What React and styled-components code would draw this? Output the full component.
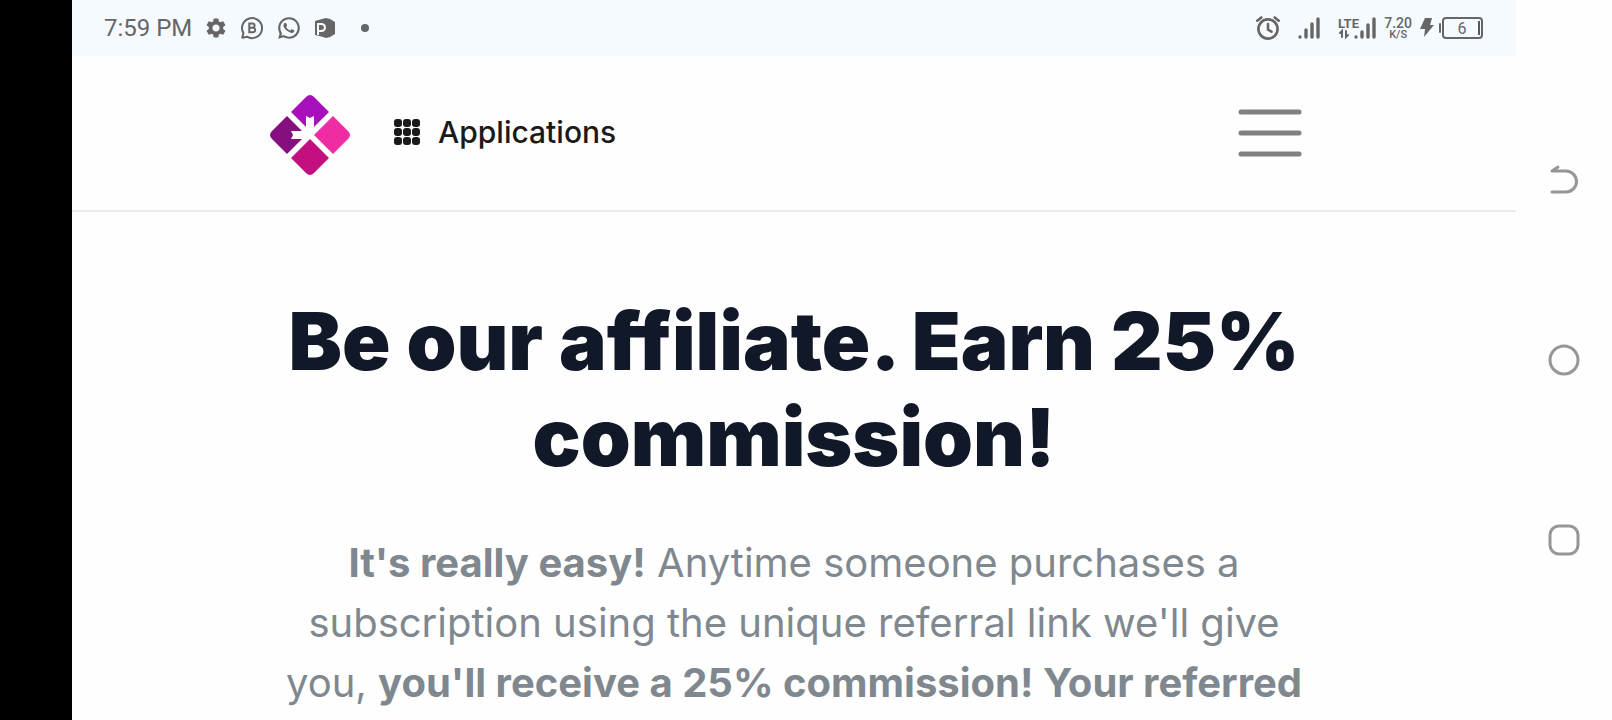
import React from 'react';
import styled, { createGlobalStyle } from 'styled-components';
import { MdSettings } from 'react-icons/md';
import { RiWhatsappLine } from 'react-icons/ri';

const GlobalStyle = createGlobalStyle`
    * {
        box-sizing: border-box;
    }

    body {
        margin: 0;
        background-color: #fefefe;
        font-family: Inter, sans-serif;
    }
`

const Screen = styled.div`
    display: grid;
    grid-template-columns: 72px 1fr 96px;
    height: 100vh;
    overflow: hidden;
`

const Bezel = styled.div`
    background-color: #000;
`

const Page = styled.div`
    min-width: 0;
    overflow: hidden;
`

// Status bar
const StatusBar = styled.div`
    display: flex;
    align-items: center;
    justify-content: space-between;
    height: 56px;
    padding: 0 32px;
    background-color: #f5faff;
    color: #666;
    font-family: Roboto, sans-serif;
`

const StatusGroup = styled.div`
    display: flex;
    align-items: center;
    gap: ${props => props.$gap}px;

    svg {
        display: block;
        flex: none;
    }
`

const Time = styled.span`
    font-size: 24px;
    line-height: 28px;
`

const Speed = styled.div`
    display: flex;
    flex-direction: column;
    align-items: center;
    padding-top: 2px;
    font-size: 14px;
    line-height: 12px;
    font-weight: 500;
`

const SpeedUnit = styled.span`
    font-size: 11px;
    line-height: 12px;
`

// Site header
const Header = styled.header`
    border-bottom: 2px solid #ebebeb;
`

const HeaderInner = styled.div`
    display: flex;
    align-items: center;
    max-width: 1080px;
    height: 154px;
    margin: 0 auto;
    padding: 0 32px 0 16px;
`

const LogoLink = styled.a`
    display: block;
    height: 80px;
    margin: 4px 44px 0 0;
`

const AppsLink = styled.a`
    display: flex;
    align-items: center;
    gap: 18px;
    margin-bottom: 2px;
    color: #1a1a1a;
    font-size: 30px;
    line-height: 36px;
    font-weight: 500;
    text-decoration: none;
`

const MenuButton = styled.button`
    margin-left: auto;
    padding: 0;
    border: 0;
    background: none;

    svg {
        display: block;
    }
`

// Hero
const Hero = styled.main`
    max-width: 1080px;
    margin: 0 auto;
    padding: 81px 16px 0;
    text-align: center;
`

const Title = styled.h1`
    margin: 0 0 48px;
    color: #111827;
    font-size: 80px;
    line-height: 96px;
    font-weight: 900;
`

const Lead = styled.p`
    margin: 0;
    color: #7f888f;
    font-size: 40px;
    line-height: 60px;
`

// Phone navigation
const PhoneNav = styled.nav`
    display: grid;
    grid-template-rows: repeat(3, 25vh);
    align-content: center;
`

const NavButton = styled.button`
    display: flex;
    align-items: center;
    justify-content: center;
    padding: 0;
    border: 0;
    background: none;
    color: #969696;
`

function BusinessIcon() {
    return (
        <svg width="24" height="24" viewBox="0 0 24 24" fill="none" stroke="currentColor" strokeWidth="2">
            <path d="M2.3 21.7l1.1-4.6A10 10 0 1 1 7 20.7z" strokeLinejoin="round" />
            <path d="M9.3 7.6h3.2a2.1 2.1 0 0 1 0 4.2H9.3zM9.3 11.8h3.7a2.2 2.2 0 0 1 0 4.4H9.3z" />
        </svg>
    )
}

function SlidesIcon() {
    return (
        <svg width="22" height="22" viewBox="0 0 22 22" fill="currentColor">
            <path d="M12 1l4 1 5 3v12l-5 3-4 1-3-1-8-2V4l7-2z" />
            <path d="M4 18V7h3.500a3 3 0 0 1 0 7H4" fill="none" stroke="#f5faff" strokeWidth="2" />
        </svg>
    )
}

function AlarmIcon() {
    return (
        <svg width="24" height="24" viewBox="0 0 24 24" fill="none" stroke="currentColor" strokeWidth="2.600" strokeLinecap="round">
            <circle cx="12" cy="13" r="9.600" />
            <path d="M12 8v5.500l3.500 2.200M1.300 4.700l4-3.200M22.700 4.700l-4-3.200" />
        </svg>
    )
}

function SignalIcon() {
    return (
        <svg width="22" height="22" viewBox="0 0 22 22" stroke="currentColor" strokeWidth="3.400" strokeLinecap="round">
            <path d="M2 20v0M8 20v-7M14 20V7M20 20V2" />
        </svg>
    )
}

function LteIcon() {
    return (
        <svg width="38" height="30" viewBox="0 0 38 30" fill="currentColor">
            <text x="0" y="15" fontFamily="Roboto, sans-serif" fontSize="13" fontWeight="700">LTE</text>
            <g fill="none" stroke="currentColor" strokeLinecap="round">
                <path d="M18 24v0M24 24v-5M30 24V12M36 24V6" strokeWidth="3.400" />
                <path d="M4 24v-6l-2 2M8 18v6l2-2" strokeWidth="2" />
            </g>
        </svg>
    )
}

function BatteryIcon() {
    return (
        <svg width="64" height="24" viewBox="0 0 64 24" fill="none" stroke="currentColor">
            <path d="M5 2h7l-2 7h4L4 21l1-8H0z" fill="currentColor" stroke="none" />
            <path d="M20 8v8" strokeWidth="2" strokeLinecap="round" />
            <rect x="23" y="2" width="39" height="20" rx="3" strokeWidth="2" />
            <path d="M59 5v14" stroke="#222" strokeWidth="1.500" />
            <text x="42" y="18" textAnchor="middle" fill="currentColor" stroke="none" fontFamily="Roboto, sans-serif" fontSize="16">6</text>
        </svg>
    )
}

function Logo() {
    return (
        <svg width="80" height="80" viewBox="0 0 80 80">
            <path d="M21 17L36 2q4-4 8 0l15 15-19 19z" fill="#a70fbb" />
            <path d="M17 21L2 36q-4 4 0 8l15 15 19-19z" fill="#860f80" />
            <path d="M63 21l15 15q4 4 0 8L63 59 44 40z" fill="#ef2ca2" />
            <path d="M21 63l15 15q4 4 8 0l15-15-19-19z" fill="#c30f80" />
            <path d="M36 21l4 2 4-2v16l-4 4-4-8z" fill="#fefefe" />
            <path d="M21 36l2 4-2 4h16l4-4-8-4z" fill="#fefefe" />
        </svg>
    )
}

function AppsIcon() {
    const cells = [0, 9, 18]
    return (
        <svg width="26" height="26" viewBox="0 0 26 26" fill="currentColor">
            {cells.map(y => cells.map(x => (
                <rect key={`${x}-${y}`} x={x} y={y} width="8" height="8" rx="3" />
            )))}
        </svg>
    )
}

function App() {
    return (
        <Screen>
            <GlobalStyle />
            <Bezel />
            <Page>
                <StatusBar>
                    <StatusGroup $gap={12}>
                        <Time>7:59 PM</Time>
                        <MdSettings size={24} />
                        <BusinessIcon />
                        <RiWhatsappLine size={26} />
                        <SlidesIcon />
                        <svg width="32" height="8" viewBox="0 0 32 8">
                            <circle cx="17" cy="4" r="4" fill="currentColor" />
                        </svg>
                    </StatusGroup>
                    <StatusGroup $gap={18}>
                        <AlarmIcon />
                        <SignalIcon />
                        <StatusGroup $gap={8}>
                            <LteIcon />
                            <Speed>
                                7.20
                                <SpeedUnit>K/S</SpeedUnit>
                            </Speed>
                            <BatteryIcon />
                        </StatusGroup>
                    </StatusGroup>
                </StatusBar>
                <Header>
                    <HeaderInner>
                        <LogoLink href="/" aria-label="Home">
                            <Logo />
                        </LogoLink>
                        <AppsLink href="/applications">
                            <AppsIcon />
                            Applications
                        </AppsLink>
                        <MenuButton type="button" aria-label="Menu">
                            <svg width="64" height="48" viewBox="0 0 64 48" stroke="#808080" strokeWidth="5" strokeLinecap="round">
                                <path d="M3 3h58M3 24h58M3 45h58" />
                            </svg>
                        </MenuButton>
                    </HeaderInner>
                </Header>
                <Hero>
                    <Title>Be our affiliate. Earn 25% commission!</Title>
                    <Lead>
                        <strong>It's really easy!</strong> Anytime someone purchases a subscription using
                        the unique referral link we'll give you, <strong>you'll receive a 25%
                        commission! Your referred</strong>
                    </Lead>
                </Hero>
            </Page>
            <PhoneNav>
                <NavButton type="button" aria-label="Back">
                    <svg width="32" height="32" viewBox="0 0 32 32" fill="none" stroke="currentColor" strokeWidth="3" strokeLinecap="round" strokeLinejoin="round">
                        <path d="M10 3L4 7h14a10.500 10.500 0 0 1 0 21H4" />
                    </svg>
                </NavButton>
                <NavButton type="button" aria-label="Home screen">
                    <svg width="32" height="32" viewBox="0 0 32 32" fill="none" stroke="currentColor" strokeWidth="3">
                        <circle cx="16" cy="16" r="14" />
                    </svg>
                </NavButton>
                <NavButton type="button" aria-label="Recent apps">
                    <svg width="32" height="32" viewBox="0 0 32 32" fill="none" stroke="currentColor" strokeWidth="3">
                        <rect x="2" y="2" width="28" height="28" rx="9" />
                    </svg>
                </NavButton>
            </PhoneNav>
        </Screen>
    )
};

export default App
